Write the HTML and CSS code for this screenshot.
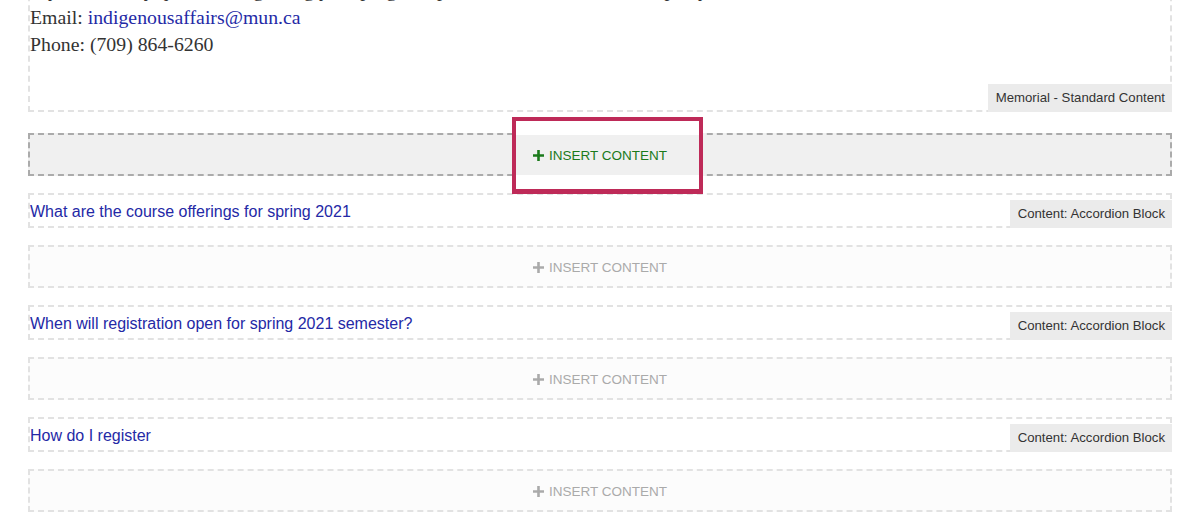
FILE: index.html
```html
<!DOCTYPE html>
<html lang="en">
<head>
<meta charset="utf-8">
<title>Page editor</title>
<link rel="stylesheet" href="styles.css">
</head>
<body>
<div class="page">
  <section class="block std">
    <p class="body-text">If you have any questions regarding your program, please reach out to us for help anytime.<br>Email: <a class="link" href="#">indigenousaffairs@mun.ca</a><br>Phone: (709) 864-6260</p>
    <span class="tag">Memorial - Standard Content</span>
  </section>

  <div class="insert active">
    <span class="insert-label"><svg class="plus" viewBox="0 0 11 11" width="11" height="11"><path d="M5.5 0V11M0 5.5H11"/></svg>INSERT CONTENT</span>
    <div class="highlight"></div>
  </div>

  <div class="block row">
    <a class="title" href="#">What are the course offerings for spring 2021</a>
    <span class="tag">Content: Accordion Block</span>
  </div>
  <div class="insert">
    <span class="insert-label"><svg class="plus" viewBox="0 0 11 11" width="11" height="11"><path d="M5.5 0V11M0 5.5H11"/></svg>INSERT CONTENT</span>
  </div>

  <div class="block row">
    <a class="title" href="#">When will registration open for spring 2021 semester?</a>
    <span class="tag">Content: Accordion Block</span>
  </div>
  <div class="insert">
    <span class="insert-label"><svg class="plus" viewBox="0 0 11 11" width="11" height="11"><path d="M5.5 0V11M0 5.5H11"/></svg>INSERT CONTENT</span>
  </div>

  <div class="block row">
    <a class="title" href="#">How do I register</a>
    <span class="tag">Content: Accordion Block</span>
  </div>
  <div class="insert">
    <span class="insert-label"><svg class="plus" viewBox="0 0 11 11" width="11" height="11"><path d="M5.5 0V11M0 5.5H11"/></svg>INSERT CONTENT</span>
  </div>
</div>
</body>
</html>
```

FILE: styles.css
```css
html, body {
  margin: 0;
  padding: 0;
  background: #ffffff;
  overflow: hidden;
}

.page {
  padding: 0 28px;
  display: flex;
  flex-direction: column;
  gap: 17px;
  font-family: "Liberation Sans", Arial, sans-serif;
}

.block {
  position: relative;
  border: 2px dashed #e2e2e2;
  background: #ffffff;
}

.std {
  margin-top: -35.3px;
  margin-bottom: 4px;
  padding: 10px 0 52.3px 0;
}

.body-text {
  margin: 0;
  font-family: "Liberation Serif", "Times New Roman", serif;
  font-size: 19.8px;
  line-height: 27px;
  color: #333333;
  white-space: nowrap;
}

.link {
  color: #2429a6;
  text-decoration: none;
}

.tag {
  position: absolute;
  right: -2px;
  bottom: -2px;
  height: 28px;
  line-height: 28px;
  padding: 0 7px 0 8px;
  font-size: 13.2px;
  color: #333333;
  background: #ebebeb;
  white-space: nowrap;
}

.row {
  padding: 6.5px 0 4.5px 0;
  line-height: 20px;
  font-size: 16px;
}

.title {
  color: #2429a6;
  text-decoration: none;
}

.insert {
  position: relative;
  height: 39px;
  border: 2px dashed #e2e2e2;
  background: #fcfcfc;
  display: flex;
  align-items: center;
  justify-content: center;
  font-size: 13.5px;
  color: #aaaaaa;
}

.insert-label {
  position: relative;
  z-index: 2;
  display: flex;
  align-items: center;
  padding-top: 2px;
}

.plus {
  margin-right: 5px;
  margin-top: -1px;
}

.plus path {
  stroke: #aaaaaa;
  stroke-width: 2.6;
  fill: none;
}

.insert.active {
  background: #f0f0f0;
  border-color: #ababab;
  color: #1b7a1b;
}

.insert.active .plus path {
  stroke: #1b7a1b;
}

.highlight {
  position: absolute;
  z-index: 1;
  top: -18px;
  left: 482px;
  width: 191px;
  height: 77px;
  box-sizing: border-box;
  border: 4px solid #be2a58;
  border-bottom-width: 5px;
  background: linear-gradient(#ffffff 0 14px, #f0f0f0 14px 54px, #ffffff 54px);
}
```
